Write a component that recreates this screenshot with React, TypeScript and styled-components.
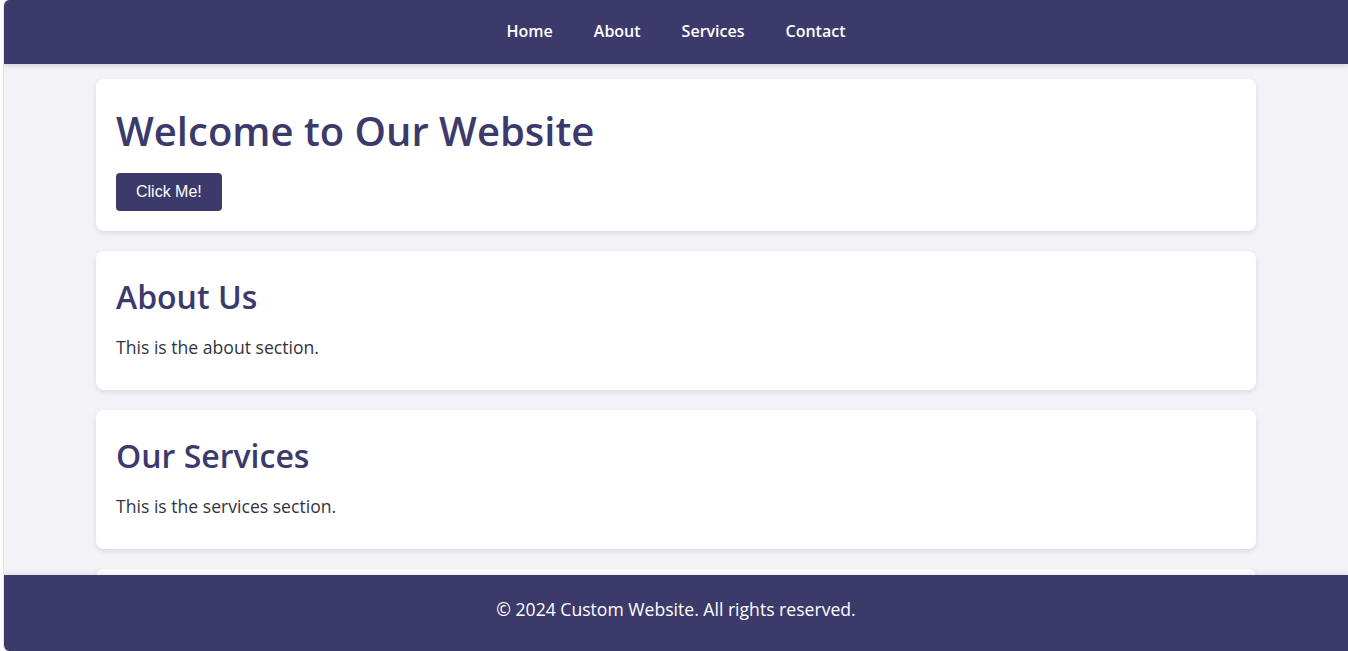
import React from "react";
import styled, { createGlobalStyle } from "styled-components";

const Global = createGlobalStyle`
  html, body { margin: 0; padding: 0; height: 100%; background: #ffffff; }
  body { font-family: "Open Sans", "Noto Sans", sans-serif; overflow: hidden; }
  #root { height: 100%; }
`;

const Frame = styled.div`
  height: 100vh;
  margin-left: 3px;
  border-left: 1px solid #e2e2e6;
  border-radius: 6px 0 0 6px;
  overflow: hidden;
  display: flex;
  flex-direction: column;
  background: #f3f2f7;
`;

const Header = styled.header`
  flex: none;
  height: 64px;
  box-sizing: border-box;
  padding-bottom: 2px;
  background: #3c3a6b;
  box-shadow: 0 2px 5px rgba(0, 0, 0, 0.12);
  display: flex;
  align-items: center;
  justify-content: center;
  position: relative;
  z-index: 2;
`;

const Nav = styled.nav`
  display: flex;
  gap: 41px;
`;

const NavLink = styled.a`
  color: #ffffff;
  font-weight: 600;
  font-size: 16px;
  text-decoration: none;
`;

const Main = styled.main`
  flex: 1;
  overflow: hidden;
  padding: 15px 20px 0;
  display: flex;
  flex-direction: column;
  align-items: center;
  gap: 20px;
`;

const Card = styled.section`
  flex: none;
  width: 100%;
  max-width: 1160px;
  box-sizing: border-box;
  background: #ffffff;
  border-radius: 8px;
  box-shadow: 0 2px 5px rgba(0, 0, 0, 0.1);
  padding: 20px;
`;

const Title = styled.h1`
  margin: 8px 0 18px;
  font-size: 40px;
  font-weight: 600;
  line-height: 1.2;
  color: #3c3a6b;
`;

const Heading = styled.h2`
  margin: 7px 0 18px;
  font-size: 32px;
  font-weight: 600;
  line-height: 1.2;
  color: #3c3a6b;
`;

const Text = styled.p`
  margin: 0 0 9px;
  font-size: 17.6px;
  line-height: 1.5;
  color: #333340;
`;

const Button = styled.button`
  background: #3c3a6b;
  color: #ffffff;
  border: none;
  border-radius: 4px;
  padding: 10px 20px;
  font-family: "Liberation Sans", Arial, sans-serif;
  font-size: 16px;
  cursor: pointer;
`;

const Footer = styled.footer`
  flex: none;
  height: 76px;
  box-sizing: border-box;
  padding-top: 21px;
  background: #3c3a6b;
  color: #ffffff;
  text-align: center;
  font-size: 17.6px;
  line-height: 26px;
  box-shadow: 0 -2px 5px rgba(0, 0, 0, 0.08);
  position: relative;
  z-index: 2;
`;

export default function App() {
  return (
    <>
      <Global />
      <Frame>
        <Header>
          <Nav>
            <NavLink href="#home">Home</NavLink>
            <NavLink href="#about">About</NavLink>
            <NavLink href="#services">Services</NavLink>
            <NavLink href="#contact">Contact</NavLink>
          </Nav>
        </Header>
        <Main>
          <Card id="home">
            <Title>Welcome to Our Website</Title>
            <Button>Click Me!</Button>
          </Card>
          <Card id="about">
            <Heading>About Us</Heading>
            <Text>This is the about section.</Text>
          </Card>
          <Card id="services">
            <Heading>Our Services</Heading>
            <Text>This is the services section.</Text>
          </Card>
          <Card id="contact">
            <Heading>Contact Us</Heading>
            <Text>This is the contact section.</Text>
          </Card>
        </Main>
        <Footer>© 2024 Custom Website. All rights reserved.</Footer>
      </Frame>
    </>
  );
}
